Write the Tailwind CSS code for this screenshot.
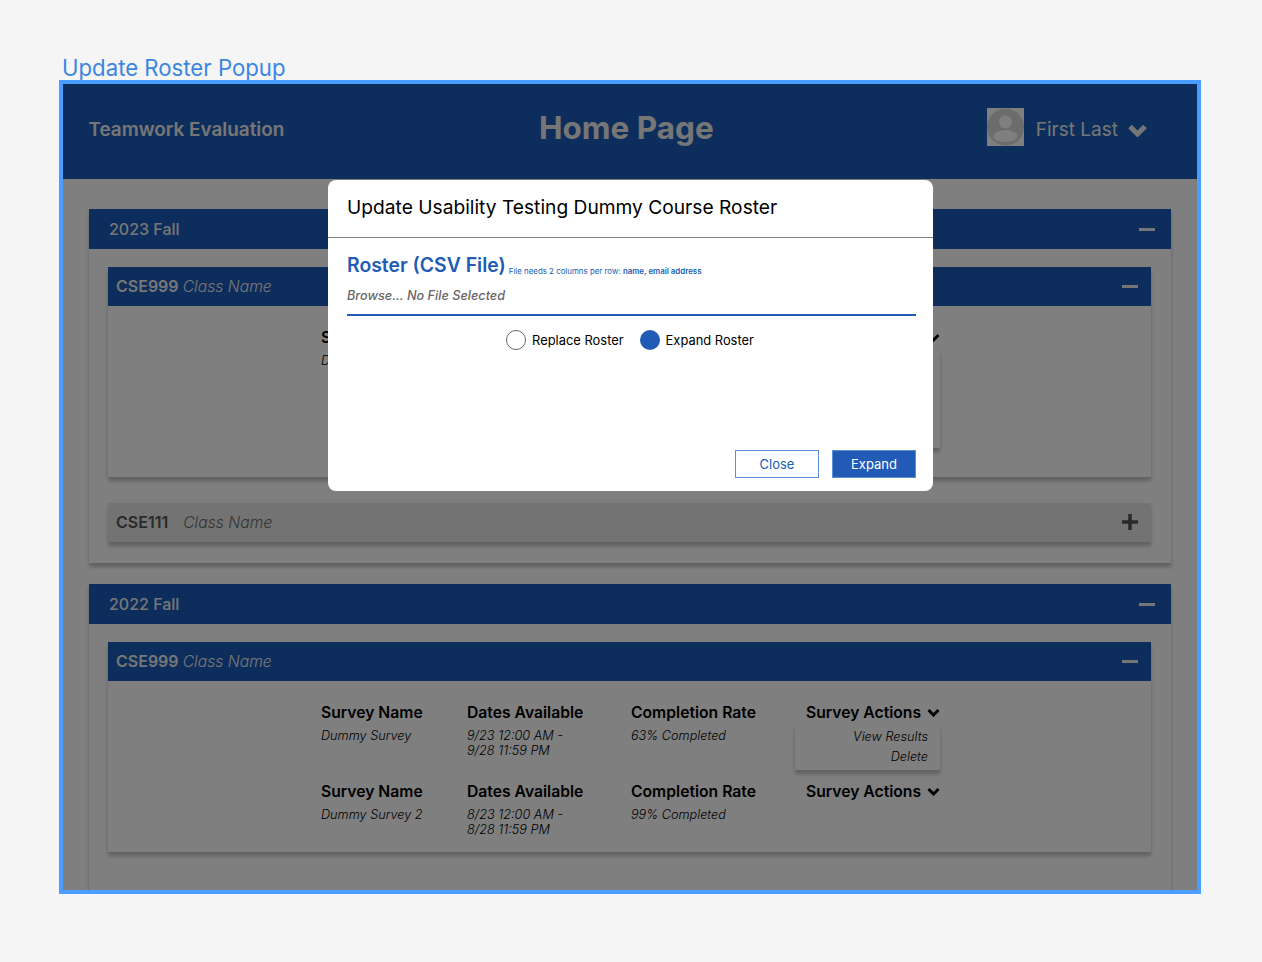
<!DOCTYPE html>
<html lang="en">
<head>
  <meta charset="UTF-8">
  <title>Update Roster Popup</title>
  <script src="https://cdn.jsdelivr.net/npm/@tailwindcss/browser@4"></script>
</head>
<body class="bg-[#f5f5f5] h-[962px] overflow-hidden font-['Inter',sans-serif]">
  <div class="pt-[53px] pl-[59px]">
    <div class="pl-[3px] h-[27px] text-[22.2px] leading-[29px] text-[#3b86e0]">Update Roster Popup</div>

    <!-- frame -->
    <div class="relative w-[1142px] h-[814px] border-4 border-[#4a9eff] overflow-hidden bg-white">
      <!-- page -->
      <div class="h-[95px] pb-[2px] bg-[#1a5ab8] flex items-center justify-between pl-[25.5px] pr-[50px] relative">
        <div class="text-[18.9px] font-semibold text-[#ededed]">Teamwork Evaluation</div>
        <div class="absolute left-[476px] -translate-y-[3px] text-[31.5px] font-bold text-[#ededed]">Home Page</div>
        <div class="flex items-center">
          <svg class="w-[37px] h-[38px] mt-[-7px]" viewBox="0 0 37 38">
            <rect width="37" height="38" fill="#ffffff"/>
            <circle cx="18.500" cy="19" r="18.500" fill="#d9d9d9"/>
            <circle cx="18.500" cy="14" r="6.500" fill="#ffffff"/>
            <ellipse cx="18.500" cy="28" rx="12" ry="6" fill="#ffffff"/>
          </svg>
          <div class="ml-[12px] text-[19px] text-[#ededed]">First Last</div>
          <svg class="ml-[10px] mb-[2px] w-[19px] h-[14px]" viewBox="0 0 19 14"><path d="M2 3.500 9.500 11 17 3.500" fill="none" stroke="#ededed" stroke-width="5"/></svg>
        </div>
      </div>

      <div class="pt-[30px] px-[26px] flex flex-col gap-[21px]">
        <!-- 2023 Fall -->
        <section class="bg-white shadow-[0_4px_4px_rgba(0,0,0,0.25)] h-[354px]">
          <div class="h-[40px] bg-[#1a5ab8] flex items-center justify-between pl-[20px] pr-[16px] text-[16px] font-medium text-[#ededed]">
            <span>2023 Fall</span>
            <span class="block w-[16px] h-[3px] bg-[#ededed]"></span>
          </div>
          <div class="pt-[18px] pl-[19px] pr-[20px] flex flex-col gap-[26px]">
            <div class="bg-white shadow-[0_4px_4px_rgba(0,0,0,0.25)] h-[210px]">
              <div class="h-[39px] pb-[1px] bg-[#1a5ab8] flex items-center justify-between pl-[8px] pr-[13px] text-[#ededed]">
                <span class="text-[16px] font-semibold">CSE999 <span class="text-[15.7px] font-light italic">Class Name</span></span>
                <span class="block w-[16px] h-[3px] bg-[#ededed]"></span>
              </div>
              <!-- middle columns sit behind the popup -->
              <div class="pt-[22px] pl-[213px] grid grid-cols-[146px_164px_175px_134px] text-black">
                <div>
                  <div class="text-[15.7px] font-semibold leading-[20px]">Survey Name</div>
                  <div class="mt-[5px] text-[12.7px] leading-[16px] italic font-light">Dummy Survey</div>
                </div>
                <div></div>
                <div></div>
                <div class="relative">
                  <div class="flex items-center justify-between text-[15.7px] font-semibold leading-[20px]">Survey Actions
                    <svg class="mb-[2px] w-[13px] h-[9px]" viewBox="0 0 13 9"><path d="M1.500 2 6.500 7 11.500 2" fill="none" stroke="#000" stroke-width="3"/></svg>
                  </div>
                  <div class="absolute left-[-11px] top-[22px] w-[145px] h-[98px] bg-white shadow-[0_4px_4px_rgba(0,0,0,0.25)]"></div>
                </div>
              </div>
            </div>
            <div class="h-[39px] pb-[1px] bg-[#e6e6e6] shadow-[0_4px_4px_rgba(0,0,0,0.25)] flex items-center justify-between pl-[8px] pr-[13px] text-[#666]">
              <span class="text-[16px]"><span class="font-semibold text-[#555]">CSE111</span><span class="ml-[15px] text-[15.7px] font-light italic">Class Name</span></span>
              <svg class="w-[16px] h-[16px]" viewBox="0 0 16 16"><path d="M8 0v16M0 8h16" stroke="#555" stroke-width="3.500"/></svg>
            </div>
          </div>
        </section>

        <!-- 2022 Fall -->
        <section class="bg-white shadow-[0_4px_4px_rgba(0,0,0,0.25)] h-[400px]">
          <div class="h-[40px] bg-[#1a5ab8] flex items-center justify-between pl-[20px] pr-[16px] text-[16px] font-medium text-[#ededed]">
            <span>2022 Fall</span>
            <span class="block w-[16px] h-[3px] bg-[#ededed]"></span>
          </div>
          <div class="pt-[18px] pl-[19px] pr-[20px]">
            <div class="bg-white shadow-[0_4px_4px_rgba(0,0,0,0.25)] h-[210px]">
              <div class="h-[39px] pb-[1px] bg-[#1a5ab8] flex items-center justify-between pl-[8px] pr-[13px] text-[#ededed]">
                <span class="text-[16px] font-semibold">CSE999 <span class="text-[15.7px] font-light italic">Class Name</span></span>
                <span class="block w-[16px] h-[3px] bg-[#ededed]"></span>
              </div>
              <div class="pt-[22px] pl-[213px] grid grid-cols-[146px_164px_175px_134px] grid-rows-[79px_60px] text-black">
                <div>
                  <div class="text-[15.7px] font-semibold leading-[20px]">Survey Name</div>
                  <div class="mt-[5px] text-[12.7px] leading-[16px] italic font-light">Dummy Survey</div>
                </div>
                <div>
                  <div class="text-[15.7px] font-semibold leading-[20px]">Dates Available</div>
                  <div class="mt-[5px] text-[12.7px] leading-[15px] italic font-light">9/23 12:00 AM -<br>9/28 11:59 PM</div>
                </div>
                <div>
                  <div class="text-[15.7px] font-semibold leading-[20px]">Completion Rate</div>
                  <div class="mt-[5px] text-[12.7px] leading-[16px] italic font-light">63% Completed</div>
                </div>
                <div class="relative">
                  <div class="flex items-center justify-between text-[15.7px] font-semibold leading-[20px]">Survey Actions
                    <svg class="mb-[2px] w-[13px] h-[9px]" viewBox="0 0 13 9"><path d="M1.500 2 6.500 7 11.500 2" fill="none" stroke="#000" stroke-width="3"/></svg>
                  </div>
                  <div class="absolute left-[-11px] top-[22px] w-[145px] h-[45px] bg-white shadow-[0_4px_4px_rgba(0,0,0,0.25)] pr-[12px] pt-[2px] text-right text-[12.7px] leading-[20px] italic font-light">View Results<br>Delete</div>
                </div>
                <div>
                  <div class="text-[15.7px] font-semibold leading-[20px]">Survey Name</div>
                  <div class="mt-[5px] text-[12.7px] leading-[16px] italic font-light">Dummy Survey 2</div>
                </div>
                <div>
                  <div class="text-[15.7px] font-semibold leading-[20px]">Dates Available</div>
                  <div class="mt-[5px] text-[12.7px] leading-[15px] italic font-light">8/23 12:00 AM -<br>8/28 11:59 PM</div>
                </div>
                <div>
                  <div class="text-[15.7px] font-semibold leading-[20px]">Completion Rate</div>
                  <div class="mt-[5px] text-[12.7px] leading-[16px] italic font-light">99% Completed</div>
                </div>
                <div class="flex items-start justify-between text-[15.7px] font-semibold leading-[20px]">Survey Actions
                  <svg class="mt-[5px] w-[13px] h-[9px]" viewBox="0 0 13 9"><path d="M1.500 2 6.500 7 11.500 2" fill="none" stroke="#000" stroke-width="3"/></svg>
                </div>
              </div>
            </div>
          </div>
        </section>
      </div>

      <!-- overlay -->
      <div class="absolute inset-0 bg-black/50"></div>

      <!-- modal -->
      <div class="absolute left-[265px] top-[96px] w-[605px] h-[311px] bg-white rounded-[8px] flex flex-col">
        <div class="h-[58px] border-b border-[#808080] pl-[19px] pt-[15px] text-[19.2px] leading-[24px] text-black">Update Usability Testing Dummy Course Roster</div>
        <div class="pl-[19px] pr-[17px] pt-[15px] pb-[13px] flex-1 flex flex-col">
          <div class="border-b-2 border-[#215bb5] h-[63px]">
            <div class="flex items-baseline text-[#215bb5]">
              <span class="text-[19.4px] leading-[24px] font-semibold">Roster (CSV File)</span>
              <span class="ml-[3px] translate-y-[2px] text-[7.9px]">File needs 2 columns per row: <span class="font-semibold">name, email address</span></span>
            </div>
            <div class="mt-[11px] text-[12.7px] leading-[16px] italic font-medium text-[#666]">Browse... No File Selected</div>
          </div>
          <div class="mt-[13px] pr-[3px] flex justify-center items-center text-[12.9px] text-black">
            <span class="w-[20px] h-[20px] rounded-full border border-[#666] bg-white"></span>
            <span class="ml-[6px] pt-[2px]">Replace Roster</span>
            <span class="ml-[16px] w-[20px] h-[20px] rounded-full bg-[#215bb5]"></span>
            <span class="ml-[6px] pt-[2px]">Expand Roster</span>
          </div>
          <div class="mt-auto flex justify-end gap-[13px] text-[13px]">
            <button class="w-[84px] h-[28px] pt-[2px] border border-[#5b8fd6] bg-white text-[#215bb5]">Close</button>
            <button class="w-[84px] h-[28px] pt-[2px] border border-[#5b8fd6] bg-[#215bb5] text-white">Expand</button>
          </div>
        </div>
      </div>
    </div>
  </div>
</body>
</html>
